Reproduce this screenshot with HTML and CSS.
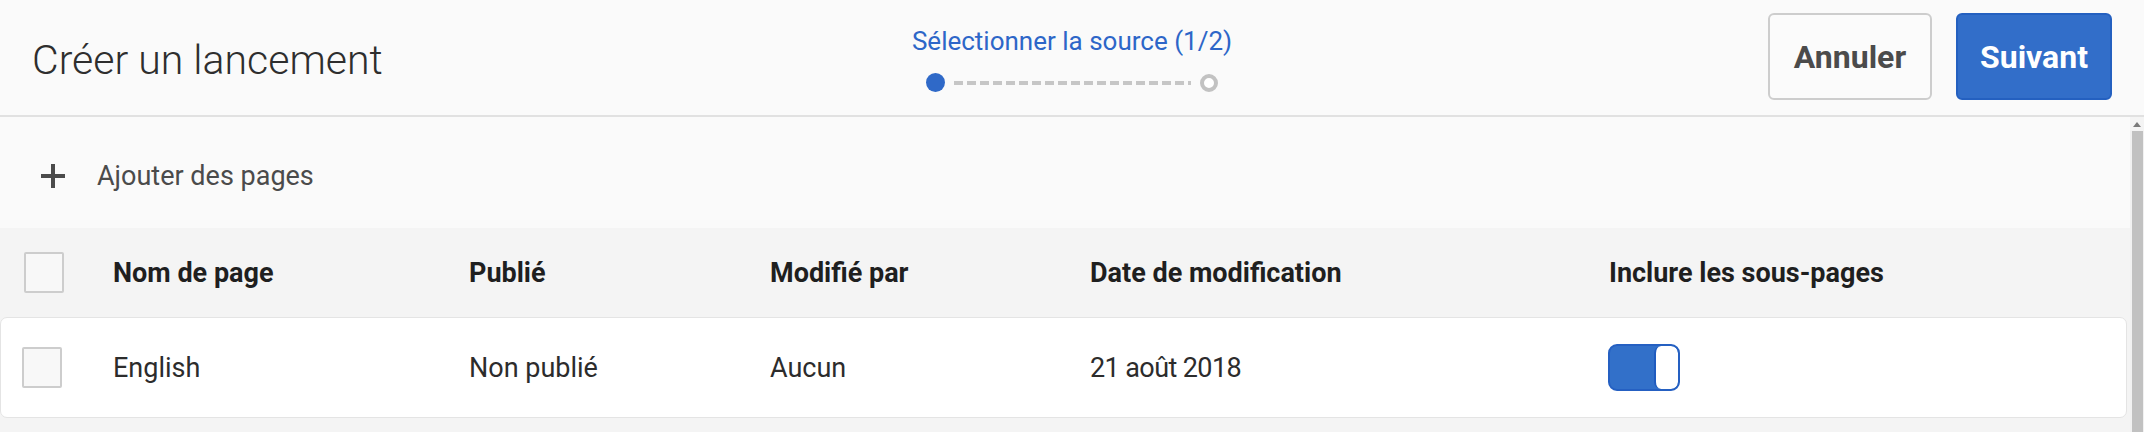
FILE: index.html
```html
<!DOCTYPE html>
<html lang="fr">
<head>
<meta charset="utf-8">
<title>Créer un lancement</title>
<link rel="stylesheet" href="styles.css">
</head>
<body>
<header class="topbar">
  <h1 class="title">Créer un lancement</h1>
  <div class="stepper">
    <div class="step-label">Sélectionner la source (1/2)</div>
    <div class="step-track">
      <span class="dot dot-active"></span>
      <span class="dash"></span>
      <span class="dot dot-next"></span>
    </div>
  </div>
  <div class="actions">
    <button class="btn btn-secondary">Annuler</button>
    <button class="btn btn-primary">Suivant</button>
  </div>
</header>
<div class="content">
  <main class="main">
    <div class="toolbar">
      <svg class="plus" viewBox="0 0 24 24" width="24" height="24" aria-hidden="true">
        <rect x="10" y="0" width="4" height="24" fill="#4b4b4b"/>
        <rect x="0" y="10" width="24" height="4" fill="#4b4b4b"/>
      </svg>
      <span class="toolbar-label">Ajouter des pages</span>
    </div>
    <div class="table">
      <div class="thead">
        <div class="cell cell-check"><span class="checkbox"></span></div>
        <div class="cell">Nom de page</div>
        <div class="cell">Publié</div>
        <div class="cell">Modifié par</div>
        <div class="cell">Date de modification</div>
        <div class="cell">Inclure les sous-pages</div>
      </div>
      <div class="trow">
        <div class="cell cell-check"><span class="checkbox"></span></div>
        <div class="cell">English</div>
        <div class="cell">Non publié</div>
        <div class="cell">Aucun</div>
        <div class="cell cell-date">21 août 2018</div>
        <div class="cell"><span class="toggle"><span class="knob"></span></span></div>
      </div>
    </div>
  </main>
  <div class="scrollbar">
    <div class="scroll-up"><span class="arrow"></span></div>
    <div class="scroll-thumb"></div>
  </div>
</div>
</body>
</html>
```
FILE: styles.css
```css
* { box-sizing: border-box; }
html, body {
  margin: 0;
  padding: 0;
  width: 2144px;
  height: 432px;
  overflow: hidden;
  background: #f4f4f4;
  font-family: Roboto, "Liberation Sans", sans-serif;
  color: #2c2c2c;
}

.topbar {
  display: grid;
  grid-template-columns: 1fr auto 1fr;
  align-items: center;
  height: 117px;
  padding: 0 32px 0 32px;
  background: #fafafa;
  border-bottom: 2px solid #e1e1e1;
}

.title {
  margin: 4px 0 0 0;
  font-size: 41px;
  font-weight: 300;
  color: #2e2e2e;
  letter-spacing: 0;
}

.stepper {
  display: flex;
  flex-direction: column;
  align-items: center;
  align-self: start;
  margin-top: 26px;
}
.step-label {
  font-size: 26px;
  line-height: 30px;
  color: #2d66c8;
}
.step-track {
  display: flex;
  align-items: center;
  gap: 9px;
  margin-top: 17px;
  height: 19px;
}
.dot {
  display: block;
  border-radius: 50%;
}
.dot-active {
  width: 19px;
  height: 19px;
  background: #2f69c8;
}
.dot-next {
  width: 18px;
  height: 18px;
  border: 4px solid #c2c2c2;
  background: #fff;
}
.dash {
  display: block;
  width: 237px;
  height: 4px;
  background: repeating-linear-gradient(90deg, #c6c6c6 0 9px, transparent 9px 13px);
}

.actions {
  display: flex;
  justify-content: flex-end;
  gap: 24px;
}
.btn {
  height: 87px;
  border-radius: 6px;
  font-family: Roboto, "Liberation Sans", sans-serif;
  font-size: 32px;
  font-weight: 700;
  padding: 0;
  margin-top: -2px;
}
.btn-secondary {
  width: 164px;
  background: #fbfbfb;
  border: 2px solid #cdcdcd;
  color: #4b4b4b;
}
.btn-primary {
  width: 156px;
  background: #326ec9;
  border: 2px solid #2460c0;
  color: #ffffff;
}

.content {
  display: flex;
  height: 315px;
}
.main {
  flex: 1;
  display: flex;
  flex-direction: column;
  background: #f4f4f4;
}
.toolbar {
  display: flex;
  align-items: center;
  gap: 32px;
  height: 111px;
  padding: 6px 0 0 41px;
  background: #fafafa;
}
.plus { display: block; }
.toolbar-label {
  font-size: 27px;
  color: #4b4b4b;
}

.thead, .trow {
  display: grid;
  grid-template-columns: 89px 356px 301px 320px 519px 1fr;
  align-items: center;
}
.thead {
  height: 89px;
  padding-left: 24px;
  background: #f4f4f4;
  font-size: 27px;
  font-weight: 700;
  color: #1f1f1f;
}
.trow {
  height: 101px;
  padding-left: 21px;
  grid-template-columns: 91px 356px 301px 320px 519px 1fr;
  margin-right: 3px;
  background: #ffffff;
  border: 1px solid #e4e4e4;
  border-radius: 7px;
  font-size: 27px;
  color: #2c2c2c;
}
.cell { white-space: nowrap; }
.cell-date { letter-spacing: -0.6px; }
.cell-check { display: flex; align-items: center; }
.checkbox {
  display: block;
  width: 40px;
  height: 41px;
  border: 2px solid #cdcdcd;
  border-radius: 2px;
  background: #f8f8f8;
}
.trow .checkbox { margin-top: -1px; }

.toggle {
  display: flex;
  justify-content: flex-end;
  width: 72px;
  height: 47px;
  margin-left: -1px;
  border: 2px solid #2560c2;
  border-radius: 9px;
  background: #3270c9;
  overflow: hidden;
}
.knob {
  display: block;
  width: 24px;
  height: 100%;
  background: #ffffff;
  border-left: 2px solid #1f5bbf;
  border-radius: 7px;
}

.scrollbar {
  width: 14px;
  display: flex;
  flex-direction: column;
  background: #f1f1f1;
}
.scroll-up {
  height: 14px;
  display: flex;
  align-items: center;
  justify-content: center;
  background: #f4f4f4;
}
.arrow {
  display: block;
  width: 0;
  height: 0;
  border-left: 4px solid transparent;
  border-right: 4px solid transparent;
  border-bottom: 5px solid #7a7a7a;
}
.scroll-thumb {
  flex: 1;
  margin: 0 1px 0 2px;
  background: #c1c1c1;
}
```
